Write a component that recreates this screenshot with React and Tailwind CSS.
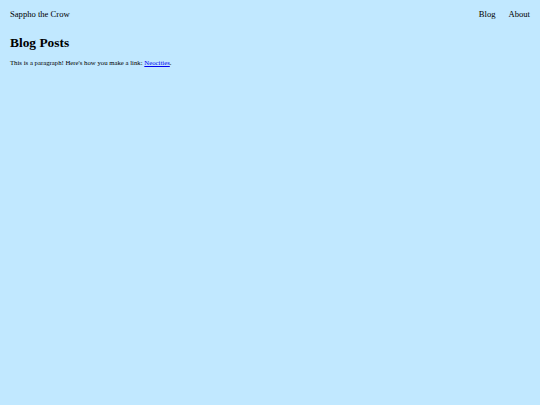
export default function App() {
  return (
    <div className="min-h-[405px] bg-[#c1e8ff] text-black font-['Liberation_Serif',serif]">
      <nav className="flex items-center justify-between px-[10px] pt-[8px] text-[8.6px] leading-[12px]">
        <a href="#" className="text-black no-underline">Sappho the Crow</a>
        <div className="flex gap-[13px]">
          <a href="#" className="text-black">Blog</a>
          <a href="#" className="text-black">About</a>
        </div>
      </nav>
      <main className="px-[10px]">
        <h1 className="mt-[14px] text-[13.4px] font-bold leading-[17px]">Blog Posts</h1>
        <p className="mt-[7px] text-[6.75px] leading-[9px]">
          This is a paragraph! Here's how you make a link:{' '}
          <a href="#" className="text-[#0000ee] underline">Neocities</a>.
        </p>
      </main>
    </div>
  );
}
